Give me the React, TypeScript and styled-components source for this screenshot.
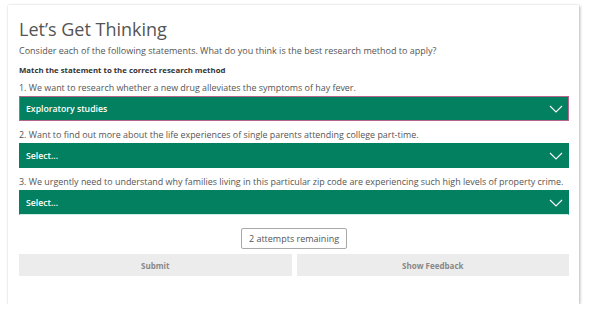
import React from "react";
import styled, { createGlobalStyle } from "styled-components";

const Global = createGlobalStyle`
  html, body { margin: 0; padding: 0; background: #fff; }
  body { font-family: "Open Sans", "Liberation Sans", sans-serif; }
`;

const Card = styled.div`
  box-sizing: border-box;
  margin: 5px 0 0 8px;
  width: 571px;
  height: 299px;
  padding: 12px 10px 0 11px;
  background: #fff;
  box-shadow: 1px 1px 3px rgba(0, 0, 0, 0.28), 0 0 1px rgba(0, 0, 0, 0.12);
  display: flex;
  flex-direction: column;
`;

const Title = styled.h1`
  margin: 0;
  font-size: 18px;
  line-height: 24px;
  font-weight: 400;
  color: #555;
`;

const Intro = styled.p`
  margin: 3px 0 0;
  font-size: 9px;
  line-height: 13px;
  color: #555;
`;

const Instruction = styled.p`
  margin: 7px 0 0;
  font-size: 7.8px;
  line-height: 12px;
  font-weight: 700;
  color: #333;
`;

const Items = styled.div`
  margin-top: 5px;
  display: flex;
  flex-direction: column;
  gap: 7px;
`;

const Item = styled.div`
  display: flex;
  flex-direction: column;
  gap: 1px;
`;

const Statement = styled.div`
  font-size: 8.92px;
  line-height: 14px;
  color: #555;
  white-space: nowrap;
`;

const Dropdown = styled.div<{ $focused?: boolean; $last?: boolean }>`
  box-sizing: border-box;
  height: 25px;
  display: flex;
  align-items: center;
  justify-content: space-between;
  padding: 0 5px 0 6px;
  background: #03805f;
  color: #fff;
  font-size: 8.7px;
  font-weight: 600;
  border: 1px solid ${(p) => (p.$focused ? "#b5668f" : "#03805f")};
  ${(p) => (p.$last ? "border-bottom: 1px solid #cdeee4;" : "")}
`;

const Chevron = () => (
  <svg width="14" height="8" viewBox="0 0 14 8" fill="none">
    <path d="M1 1 L7 7 L13 1" stroke="#fff" strokeWidth="1.1" />
  </svg>
);

const Attempts = styled.div`
  align-self: center;
  margin-top: 13px;
  box-sizing: border-box;
  height: 21px;
  padding: 0 7px;
  display: flex;
  align-items: center;
  border: 1px solid #a8a8a8;
  border-radius: 2px;
  font-size: 9px;
  color: #555;
`;

const Actions = styled.div`
  margin-top: 5px;
  display: grid;
  grid-template-columns: 1fr 1fr;
  gap: 5px;
`;

const ActionButton = styled.div`
  height: 22px;
  display: flex;
  align-items: center;
  justify-content: center;
  background: #ececec;
  color: #888;
  font-size: 8px;
  font-weight: 700;
`;

const items = [
  {
    q: "1. We want to research whether a new drug alleviates the symptoms of hay fever.",
    a: "Exploratory studies",
  },
  {
    q: "2. Want to find out more about the life experiences of single parents attending college part-time.",
    a: "Select...",
  },
  {
    q: "3. We urgently need to understand why families living in this particular zip code are experiencing such high levels of property crime.",
    a: "Select...",
  },
];

export default function App() {
  return (
    <>
      <Global />
      <Card>
        <Title>Let’s Get Thinking</Title>
        <Intro>
          Consider each of the following statements. What do you think is the best research method to apply?
        </Intro>
        <Instruction>Match the statement to the correct research method</Instruction>
        <Items>
          {items.map((it, i) => (
            <Item key={i}>
              <Statement>{it.q}</Statement>
              <Dropdown $focused={i === 0} $last={i === items.length - 1}>
                <span>{it.a}</span>
                <Chevron />
              </Dropdown>
            </Item>
          ))}
        </Items>
        <Attempts>2 attempts remaining</Attempts>
        <Actions>
          <ActionButton>Submit</ActionButton>
          <ActionButton>Show Feedback</ActionButton>
        </Actions>
      </Card>
    </>
  );
}
